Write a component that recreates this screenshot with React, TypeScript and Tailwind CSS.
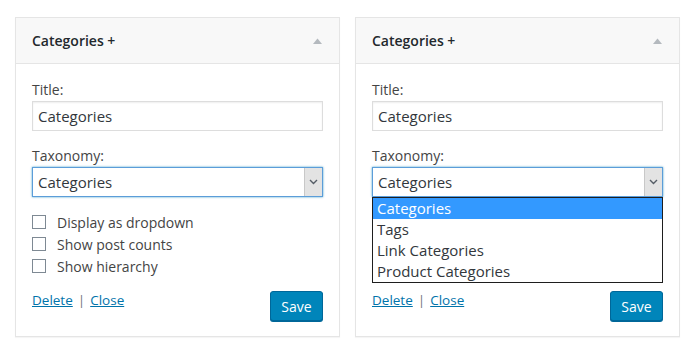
import React from 'react';

const font = { fontFamily: '"Open Sans", "Liberation Sans", sans-serif' };

const Chevron = () => (
  <svg width="9" height="6" viewBox="0 0 9 6" className="block">
    <path d="M1 1l3.5 3.5L8 1" fill="none" stroke="#555d66" strokeWidth="1.4" />
  </svg>
);

const taxonomies = ['Categories', 'Tags', 'Link Categories', 'Product Categories'];
const options = ['Display as dropdown', 'Show post counts', 'Show hierarchy'];

const WidgetPanel: React.FC<{ open?: boolean }> = ({ open = false }) => {
  return (
    <div className="w-[325px] h-[320px] border border-[#e5e5e5] bg-white shadow-[0_1px_1px_rgba(0,0,0,0.04)] flex flex-col">
      <div className="h-[46px] shrink-0 flex items-center justify-between px-4 bg-[#f8f8f8] border-b border-[#e5e5e5]">
        <span className="text-[14px] font-semibold text-[#23282d]">Categories +</span>
        <svg width="9" height="6" viewBox="0 0 9 6" className="mr-[1px]">
          <path d="M0 6L4.5 0.5L9 6Z" fill="#b4b9be" />
        </svg>
      </div>

      <div className="flex-1 px-4 pt-4 pb-4 flex flex-col text-[#444]">
        <label className="text-[14px] leading-[20px]">Title:</label>
        <div className="mt-[1px] h-[30px] border border-[#dddddd] shadow-[inset_0_1px_2px_rgba(0,0,0,0.07)] flex items-center px-[5px] text-[15px] text-[#32373c]">
          Categories
        </div>

        <label className="mt-[15px] text-[14px] leading-[20px]">Taxonomy:</label>
        <div className="relative mt-[1px]">
          <div className="h-[30px] border border-[#5b9dd9] shadow-[0_0_2px_rgba(30,140,190,0.8)] flex items-stretch bg-white">
            <span className="flex-1 flex items-center px-[5px] text-[15px] text-[#32373c]">Categories</span>
            <span className="w-[18px] bg-[#e3e3e3] border-l border-[#c8c8c8] flex items-center justify-center">
              <Chevron />
            </span>
          </div>
          {open && (
            <ul className="absolute left-0 right-0 top-[30px] z-10 bg-white border border-[#1e1e1e] text-[15px] leading-[21px] text-[#32373c]">
              {taxonomies.map((t, i) => (
                <li
                  key={t}
                  className={i === 0 ? 'px-[4px] bg-[#3399ff] text-white' : 'px-[4px]'}
                >
                  {t}
                </li>
              ))}
            </ul>
          )}
        </div>

        <div className="mt-[14px] flex flex-col">
          {options.map((o) => (
            <label key={o} className="h-[22px] flex items-center gap-[11px] text-[14px] text-[#444]">
              <span className="w-[14px] h-[14px] border border-[#7e8993] bg-white shrink-0" />
              {o}
            </label>
          ))}
        </div>

        <div className="mt-[14px] flex items-start justify-between">
          <div className="-mt-[1px] text-[13.5px] leading-[20px]">
            <a className="text-[#0073aa] underline">Delete</a>
            <span className="text-[#72777c] mx-[5px]">|</span>
            <a className="text-[#0073aa] underline">Close</a>
          </div>
          <button className="w-[53px] h-[30px] rounded-[3px] bg-[#0085ba] border border-[#006799] text-white text-[14px] shadow-[0_1px_0_#006799]">
            Save
          </button>
        </div>
      </div>
    </div>
  );
};

const App: React.FC = () => {
  return (
    <div className="w-[700px] h-[356px] bg-white overflow-hidden" style={font}>
      <div className="flex gap-[15px] pl-[15px] pt-[17px]">
        <WidgetPanel />
        <WidgetPanel open />
      </div>
    </div>
  );
};

export default App;
